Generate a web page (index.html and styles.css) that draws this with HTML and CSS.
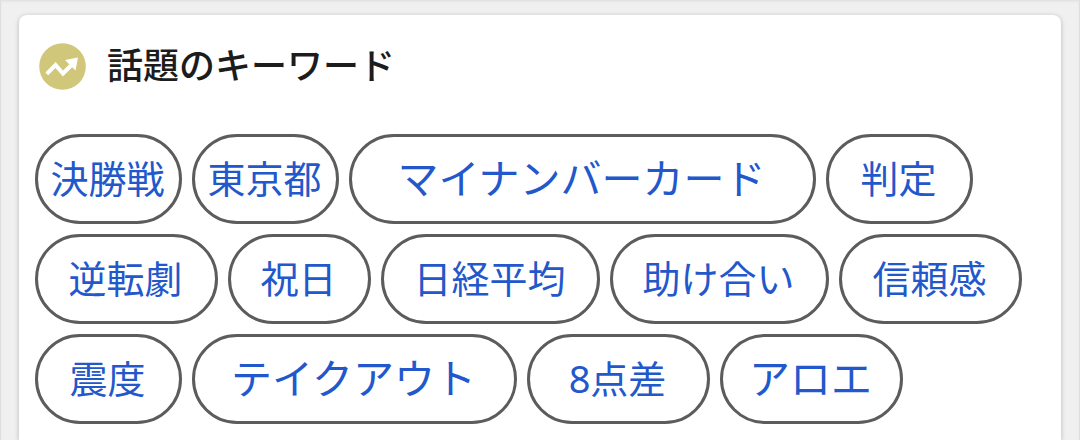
FILE: index.html
```html
<!DOCTYPE html>
<html lang="ja">
<head>
<meta charset="utf-8">
<meta name="viewport" content="width=device-width, initial-scale=1">
<title>話題のキーワード</title>
<link rel="stylesheet" href="styles.css">
</head>
<body>
<main class="page">
  <section class="card" aria-labelledby="keywords-title">
    <header class="card-header">
      <svg class="trend-icon" viewBox="0 0 48 48" aria-hidden="true">
        <circle cx="23.500" cy="23.500" r="23.300" fill="#d1c77a"/>
        <path d="M7.800 30.800 16.500 22l7.500 8.500L34 20.500" fill="none" stroke="#fff" stroke-width="4"/>
        <path d="M39 14.500 26 17 36.500 27.500z" fill="#fff"/>
      </svg>
      <h1 class="card-title" id="keywords-title">話題のキーワード</h1>
    </header>
    <ul class="keywords">
      <li><a class="pill pill-small" href="#">決勝戦</a></li>
      <li><a class="pill pill-small" href="#">東京都</a></li>
      <li><a class="pill pill-full kana" href="#">マイナンバーカード</a></li>
      <li><a class="pill pill-small" href="#">判定</a></li>
      <li><a class="pill pill-medium" href="#">逆転劇</a></li>
      <li><a class="pill pill-tiny" href="#">祝日</a></li>
      <li><a class="pill pill-large" href="#">日経平均</a></li>
      <li><a class="pill pill-large" href="#">助け合い</a></li>
      <li><a class="pill pill-medium" href="#">信頼感</a></li>
      <li><a class="pill pill-small" href="#">震度</a></li>
      <li><a class="pill pill-wide kana" href="#">テイクアウト</a></li>
      <li><a class="pill pill-medium" href="#">8点差</a></li>
      <li><a class="pill pill-medium kana" href="#">アロエ</a></li>
    </ul>
  </section>
</main>
</body>
</html>
```
FILE: styles.css
```css
* {
  box-sizing: border-box;
}

body {
  margin: 0;
  background: #f0f0f0;
  font-family: "Noto Sans", "Noto Sans CJK JP", sans-serif;
}

.page {
  display: flex;
  flex-direction: column;
  min-height: 100vh;
  padding: 15px 18px 0;
  border: solid #dcdee0;
  border-width: 0 1px;
  box-shadow: inset 0 2px 3px -1px #dcdcdc;
}

.card {
  flex: 1;
  padding: 28px 16px 16px;
  background: #fff;
  border-radius: 8px 8px 0 0;
  box-shadow: 0 1px 5px rgba(0, 0, 0, 0.24);
}

.card-header {
  display: flex;
  align-items: center;
  gap: 20px;
  height: 48px;
  margin-bottom: 43px;
  padding-left: 4px;
}

.trend-icon {
  width: 48px;
  height: 48px;
}

.card-title {
  margin: 0;
  padding-bottom: 2px;
  color: #1c1c1c;
  font-size: 36px;
  font-weight: 500;
  line-height: 48px;
}

.keywords {
  display: flex;
  flex-wrap: wrap;
  gap: 10px;
  margin: 0;
  padding: 0;
  list-style: none;
}

.pill {
  display: flex;
  align-items: center;
  justify-content: center;
  height: 90px;
  padding: 0 2px 2px 0;
  border: 3px solid #5c5c5c;
  border-radius: 45px;
  color: #2258cb;
  font-size: 38px;
  line-height: 48px;
  text-decoration: none;
  white-space: nowrap;
}

.kana {
  font-size: 41px;
}

.pill-tiny {
  min-width: 143px;
}

.pill-small {
  min-width: 147px;
}

.pill-medium {
  min-width: 183px;
}

.pill-large {
  min-width: 219px;
}

.pill-wide {
  min-width: 325px;
}

.pill-full {
  min-width: 467px;
}
```
